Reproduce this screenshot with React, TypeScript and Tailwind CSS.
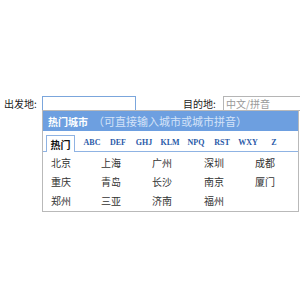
const letters = ["ABC", "DEF", "GHJ", "KLM", "NPQ", "RST", "WXY", "Z"];

const cities = [
  ["北京", "上海", "广州", "深圳", "成都"],
  ["重庆", "青岛", "长沙", "南京", "厦门"],
  ["郑州", "三亚", "济南", "福州"],
];

export default function App() {
  return (
    <div className="relative h-[300px] w-[300px] overflow-hidden bg-white font-['Noto_Sans_CJK_SC',sans-serif] text-[10px] text-[#333]">
      <div className="flex items-center pt-[96px]">
        <span className="w-[42px] shrink-0 whitespace-nowrap pl-[4px] leading-[15px] text-[#222]">出发地:</span>
        <input
          className="h-[15px] w-[94px] shrink-0 border border-[#7ba6dc] bg-white px-[2px] text-[10px] outline-none"
          defaultValue=""
        />
        <span className="ml-[47px] w-[40px] shrink-0 whitespace-nowrap leading-[15px] text-[#222]">目的地:</span>
        <input
          className="h-[15px] w-[80px] shrink-0 border border-[#b5b5b5] bg-white px-[2px] text-[10px] leading-[13px] outline-none placeholder:text-[#999]"
          placeholder="中文/拼音"
        />
      </div>

      <div className="absolute left-[42px] top-[110px] h-[102px] w-[257px] border border-[#b9b9b9] bg-white">
        <div className="flex h-[20px] items-center whitespace-nowrap bg-[#6d9fe0] pl-[5px] text-[10px]">
          <span className="font-bold text-white">热门城市</span>
          <span className="ml-[5px] text-[11px] text-[#d4e3f8]">（可直接输入城市或城市拼音）</span>
        </div>
        <div className="flex h-[21px] items-end border-b border-[#8fb3e3] pl-[3px]">
          <div className="-mb-px flex h-[17px] w-[29px] items-center justify-center border border-b-0 border-[#8fb3e3] bg-white font-bold text-[#111]">
            热门
          </div>
          <div className="flex h-[17px] items-center pl-[4px]">
            {letters.map((l) => (
              <span
                key={l}
                className="w-[26px] text-center font-['Liberation_Serif',serif] text-[8px] font-bold text-[#2a5aa8]"
              >
                {l}
              </span>
            ))}
          </div>
        </div>
        <div className="pl-[8px] pt-[1px]">
          {cities.map((row, i) => (
            <div key={i} className="grid h-[19px] grid-cols-[50px_51px_52px_51px_51px] items-center">
              {row.map((c) => (
                <span key={c}>{c}</span>
              ))}
            </div>
          ))}
        </div>
      </div>
    </div>
  );
}
